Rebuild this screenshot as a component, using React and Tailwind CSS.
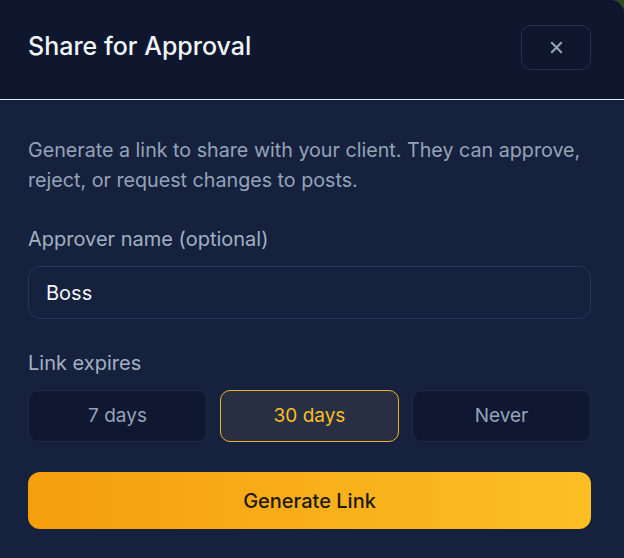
import React from "react";

export default function App() {
  const opts = ["7 days", "30 days", "Never"];
  return (
    <div className="w-[624px] h-[558px] bg-[#2f4a1e]">
      <div className="w-[624px] h-[558px] bg-[#16213e] flex flex-col overflow-hidden rounded-tr-[14px]" style={{ fontFamily: "Inter, 'Liberation Sans', sans-serif" }}>
        <div className="h-[99px] bg-[#0f172f] flex items-center justify-between pl-[28px] pr-[33px] pb-[5px] shrink-0">
          <h2 className="text-[25px] font-medium text-[#f1f5f9]">Share for Approval</h2>
          <button className="w-[70px] h-[45px] rounded-[10px] border border-[#27324a] flex items-center justify-center text-[#94a3b8]">
            <svg width="15" height="15" viewBox="0 0 16 16" fill="none" stroke="currentColor" strokeWidth="2.2" strokeLinecap="round">
              <path d="M3 3l10 10M13 3L3 13" />
            </svg>
          </button>
        </div>
        <div className="h-px bg-[#e2e8f0] shrink-0" />
        <div className="flex flex-col pl-[28px] pr-[33px] pt-[35px]">
          <p className="text-[19.7px] leading-[30px] text-[#94a3b8]">
            Generate a link to share with your client. They can approve, reject, or request changes to posts.
          </p>
          <label className="mt-[31px] text-[20px] leading-[26px] text-[#a3b0c2]">Approver name (optional)</label>
          <div className="mt-[14px] h-[53px] rounded-[12px] border border-[#2a3654] bg-[#16213e] flex items-center px-[17px] text-[20px] text-[#f1f5f9]">
            Boss
          </div>
          <label className="mt-[31px] text-[20px] leading-[26px] text-[#a3b0c2]">Link expires</label>
          <div className="mt-[14px] grid grid-cols-3 gap-[13px]">
            {opts.map((o) => {
              const sel = o === "30 days";
              return (
                <button
                  key={o}
                  className={
                    sel
                      ? "h-[52px] rounded-[10px] border border-[#f0b12a] bg-[#282f42] text-[#fbbf24] text-[19px]"
                      : "h-[52px] rounded-[10px] border border-[#1f2a44] bg-[#0f1830] text-[#94a3b8] text-[19px]"
                  }
                >
                  {o}
                </button>
              );
            })}
          </div>
          <button className="mt-[30px] h-[57px] rounded-[12px] bg-gradient-to-r from-[#f59e0b] to-[#fbbf24] text-[#1c1917] text-[20px] font-medium">
            Generate Link
          </button>
        </div>
      </div>
    </div>
  );
}
